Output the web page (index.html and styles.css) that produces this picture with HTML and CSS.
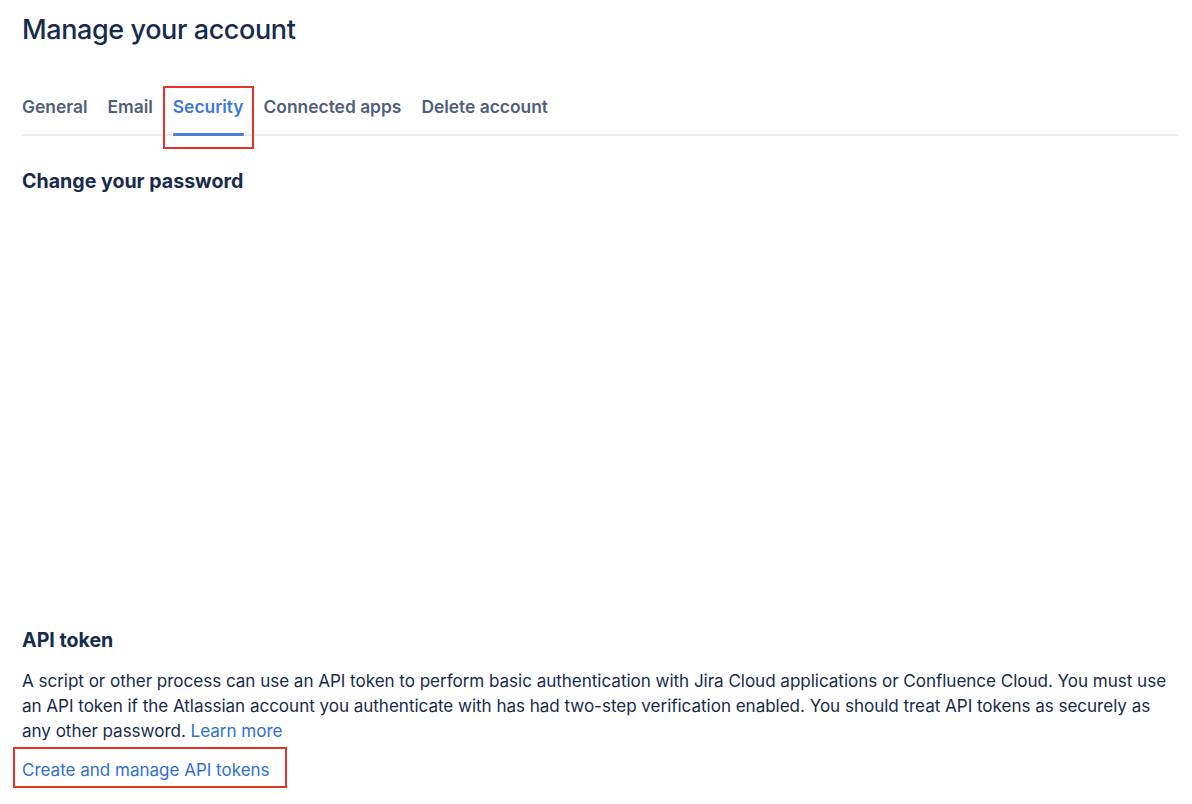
FILE: index.html
```html
<!DOCTYPE html>
<html lang="en">
<head>
<meta charset="utf-8">
<title>Manage your account</title>
<link rel="stylesheet" href="styles.css">
</head>
<body>
<main class="page">
  <h1 class="title">Manage your account</h1>
  <nav class="tabs">
    <a class="tab">General</a>
    <a class="tab">Email</a>
    <a class="tab tab-active">Security</a>
    <a class="tab">Connected apps</a>
    <a class="tab">Delete account</a>
  </nav>
  <section class="section-password">
    <h2 class="section-title">Change your password</h2>
  </section>
  <section class="section-api">
    <h2 class="section-title">API token</h2>
    <p class="desc">A script or other process can use an API token to perform basic authentication with Jira Cloud applications or Confluence Cloud. You must use an API token if the Atlassian account you authenticate with has had two-step verification enabled. You should treat API tokens as securely as any other password. <a class="link">Learn more</a></p>
    <a class="link manage-link">Create and manage API tokens</a>
  </section>
</main>
</body>
</html>
```
FILE: styles.css
```css
* { box-sizing: border-box; }
html, body { margin: 0; padding: 0; background: #ffffff; }
body {
  font-family: Inter, "Liberation Sans", Arial, sans-serif;
  color: #172B4D;
  width: 1192px;
  height: 804px;
  overflow: hidden;
}
.page {
  padding: 0 14px 0 22px;
  display: flex;
  flex-direction: column;
}
.title {
  margin: 12px 0 0 0;
  font-size: 27px;
  line-height: 36px;
  font-weight: 500;
  letter-spacing: -0.4px;
  color: #172B4D;
}
.tabs {
  margin-top: 47px;
  display: flex;
  gap: 20px;
  border-bottom: 2px solid #EBECF0;
}
.tab {
  position: relative;
  font-size: 17.4px;
  line-height: 24px;
  font-weight: 600;
  color: #505F79;
  padding-bottom: 15px;
}
.tab-active {
  color: #3C78DB;
}
.tab-active::before {
  content: "";
  position: absolute;
  left: 0;
  right: 0;
  bottom: -2px;
  height: 3px;
  background: #4A80DE;
  border-radius: 1px;
}
.tab-active::after {
  content: "";
  position: absolute;
  left: -10px;
  right: -10px;
  top: -9px;
  bottom: -15px;
  border: 2px solid #E5332A;
}
.section-title {
  margin: 0;
  font-size: 19.6px;
  line-height: 24px;
  font-weight: 700;
  color: #172B4D;
}
.section-password {
  margin-top: 33px;
  height: 459px;
}
.section-api {
  display: flex;
  flex-direction: column;
}
.desc {
  margin: 16px 0 0 0;
  font-size: 17.1px;
  line-height: 25px;
  letter-spacing: -0.05px;
  color: #172B4D;
}
.link {
  color: #2F6FD8;
  text-decoration: none;
}
.manage-link {
  align-self: flex-start;
  display: inline-block;
  margin: 4px 0 0 -9px;
  padding: 10px 15px 5px 7px;
  border: 2px solid #E5332A;
  font-size: 17px;
  line-height: 22px;
}
```
